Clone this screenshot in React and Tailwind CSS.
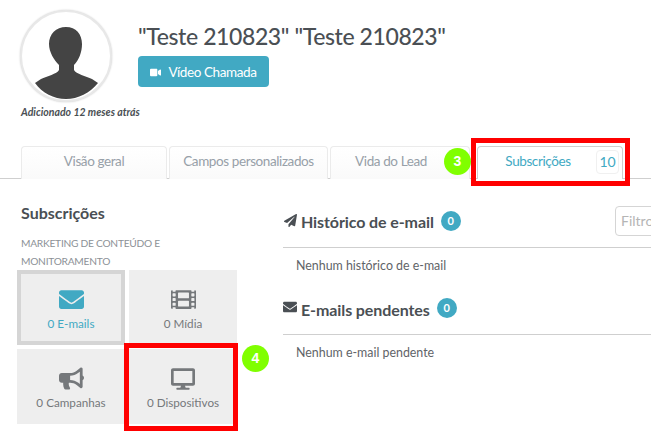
import React from 'react';
import { FaBullhorn, FaDesktop, FaEnvelope, FaFilm, FaPaperPlane, FaVideo } from 'react-icons/fa';

function Tab(props) {
    return (
        <div className={`${props.className} flex h-[33px] items-center justify-center rounded-t border border-b-0 border-[#ebebeb] bg-gradient-to-b from-white to-[#fafafa] pb-[3px] text-[13.5px] tracking-[-0.4px] text-[#97a0a8]`}>
            {props.label}
        </div>
    );
}

function Tile(props) {
    const Icon = props.icon;
    return (
        <div className={`${props.active ? 'border-4 border-[#d5d5d5] text-[#41a9c3]' : 'text-[#75787b]'} flex h-[75px] w-[108px] flex-col items-center justify-center bg-[#eeeeee] pt-[3px]`}>
            <Icon size={props.size}/>
            <span className="mt-[4px] text-[11.7px] leading-[15px]">{props.label}</span>
        </div>
    );
}

function Marker(props) {
    return (
        <div className={`${props.className} absolute flex h-[27px] w-[27px] items-center justify-center rounded-full bg-[#80ff00] pb-[1px] text-[14px] font-bold text-white [font-family:'Liberation_Sans',sans-serif]`}>
            {props.n}
        </div>
    );
}

function Count(props) {
    return (
        <span className={`${props.className} ml-[7px] flex h-[20px] w-[20px] items-center justify-center rounded-full bg-[#41a9c3] text-[11px] font-bold text-white`}>{props.n}</span>
    );
}

export default function App() {
    return (
        <div className="relative h-[431px] w-[651px] overflow-hidden bg-white font-['Lato',sans-serif] text-[#4a4f54]">
            <header className="flex h-[146px] pl-[20px] pt-[10px]">
                <div className="flex w-[120px] flex-col">
                    <div className="h-[92px] w-[92px] overflow-hidden rounded-full border-2 border-[#e8e8e8] bg-white shadow-[0_0_2px_rgba(0,0,0,0.2)]">
                        <svg width="88" height="88" viewBox="2 2 88 88" fill="#444444">
                            <path d="M46 17C56 17 62 24 62 34C62 42 59 50 54 55L54 60C56 64 66 66 72 69L78 73C70 83 58 89 46 89C34 89 22 83 15 73L21 69C27 66 37 64 39 60L39 55C34 50 29 42 29 34C29 24 36 17 46 17Z"/>
                        </svg>
                    </div>
                    <div className="mt-[3px] ml-[1px] text-[10.5px] font-bold italic leading-[14px] whitespace-nowrap">Adicionado 12 meses atrás</div>
                </div>
                <div className="pt-[11px] -ml-[2px]">
                    <h1 className="text-[23px] font-medium leading-[30px] tracking-[-0.4px] text-[#4a4f54] whitespace-nowrap">"Teste 210823" "Teste 210823"</h1>
                    <button type="button" className="mt-[5px] flex h-[31px] w-[131px] items-center justify-center gap-[7px] rounded bg-[#41a9c3] pt-[1px] text-[13.5px] tracking-[-0.4px] text-white">
                        <FaVideo size={11}/>
                        <span>Vídeo Chamada</span>
                    </button>
                </div>
            </header>

            <nav className="flex h-[33px] border-b border-[#cfcfcf] pl-[21px]">
                <Tab className="w-[146px]" label="Visão geral"/>
                <Tab className="ml-[2px] w-[159px]" label="Campos personalizados"/>
                <Tab className="ml-[2px] w-[140px] pr-[18px]" label="Vida do Lead"/>
                <div className="relative ml-[7px] flex h-[33px] w-[146px] items-center rounded-t border border-b-0 border-[#cfcfcf] bg-white pb-[3px] text-[13.5px] tracking-[-0.4px] text-[#41a9c3]">
                    <span className="w-[120px] text-center">Subscrições</span>
                    <span className="-ml-[2px] flex h-[24px] w-[23px] items-center justify-center rounded border border-[#f0f0f0] text-[14px] tracking-normal">10</span>
                </div>
            </nav>

            <main className="flex">
                <aside className="w-[266px] pl-[17px]">
                    <h2 className="mt-[24px] ml-[4px] text-[16px] font-bold leading-[20px]">Subscrições</h2>
                    <p className="mt-[11px] ml-[4px] w-[180px] text-[10.2px] leading-[18px] tracking-[-0.25px] text-[#8c9196]">MARKETING DE CONTEÚDO E MONITORAMENTO</p>
                    <div className="grid w-[220px] grid-cols-[108px_108px] gap-[4px]">
                        <Tile active icon={FaEnvelope} size={25} label="0 E-mails"/>
                        <Tile icon={FaFilm} size={25} label="0 Mídia"/>
                        <Tile icon={FaBullhorn} size={25} label="0 Campanhas"/>
                        <Tile icon={FaDesktop} size={24} label="0 Dispositivos"/>
                    </div>
                </aside>
                <section className="flex-1 pl-[17px]">
                    <div className="mt-[31px] flex h-[38px] items-start border-b border-[#cfcfcf]">
                        <FaPaperPlane size={13} className="mr-[4px] ml-[1px] mt-[4px] text-[#4a4f54]"/>
                        <h3 className="text-[16px] font-bold leading-[24px] tracking-[-0.1px]">Histórico de e-mail</h3>
                        <Count className="mt-[1px]" n="0"/>
                        <div className="ml-auto h-[30px] w-[56px] -mt-[4px] -mr-[20px] rounded-l border border-[#d5d5d5] pl-[5px] text-[14px] leading-[28px] text-[#b5b5b5]">Filtro</div>
                    </div>
                    <p className="ml-[13px] mt-[9px] text-[12.4px] leading-[18px] text-[#5f6468]">Nenhum histórico de e-mail</p>
                    <div className="mt-[23px] flex h-[37px] items-start border-b border-[#cfcfcf]">
                        <FaEnvelope size={14} className="mr-[4px] mt-[2px] text-[#4a4f54]"/>
                        <h3 className="text-[16px] font-bold leading-[24px] tracking-[-0.1px]">E-mails pendentes</h3>
                        <Count n="0"/>
                    </div>
                    <p className="ml-[13px] mt-[9px] text-[12.4px] leading-[18px] text-[#5f6468]">Nenhum e-mail pendente</p>
                </section>
            </main>

            {/* annotations over the screenshot */}
            <div className="absolute left-[471px] top-[138px] h-[48px] w-[159px] border-[5px] border-[#ff0000]"/>
            <div className="absolute left-[124px] top-[343px] h-[88px] w-[114px] border-[5px] border-[#ff0000]"/>
            <Marker className="left-[444px] top-[148px]" n="3"/>
            <Marker className="left-[242px] top-[345px]" n="4"/>
        </div>
    );
}
